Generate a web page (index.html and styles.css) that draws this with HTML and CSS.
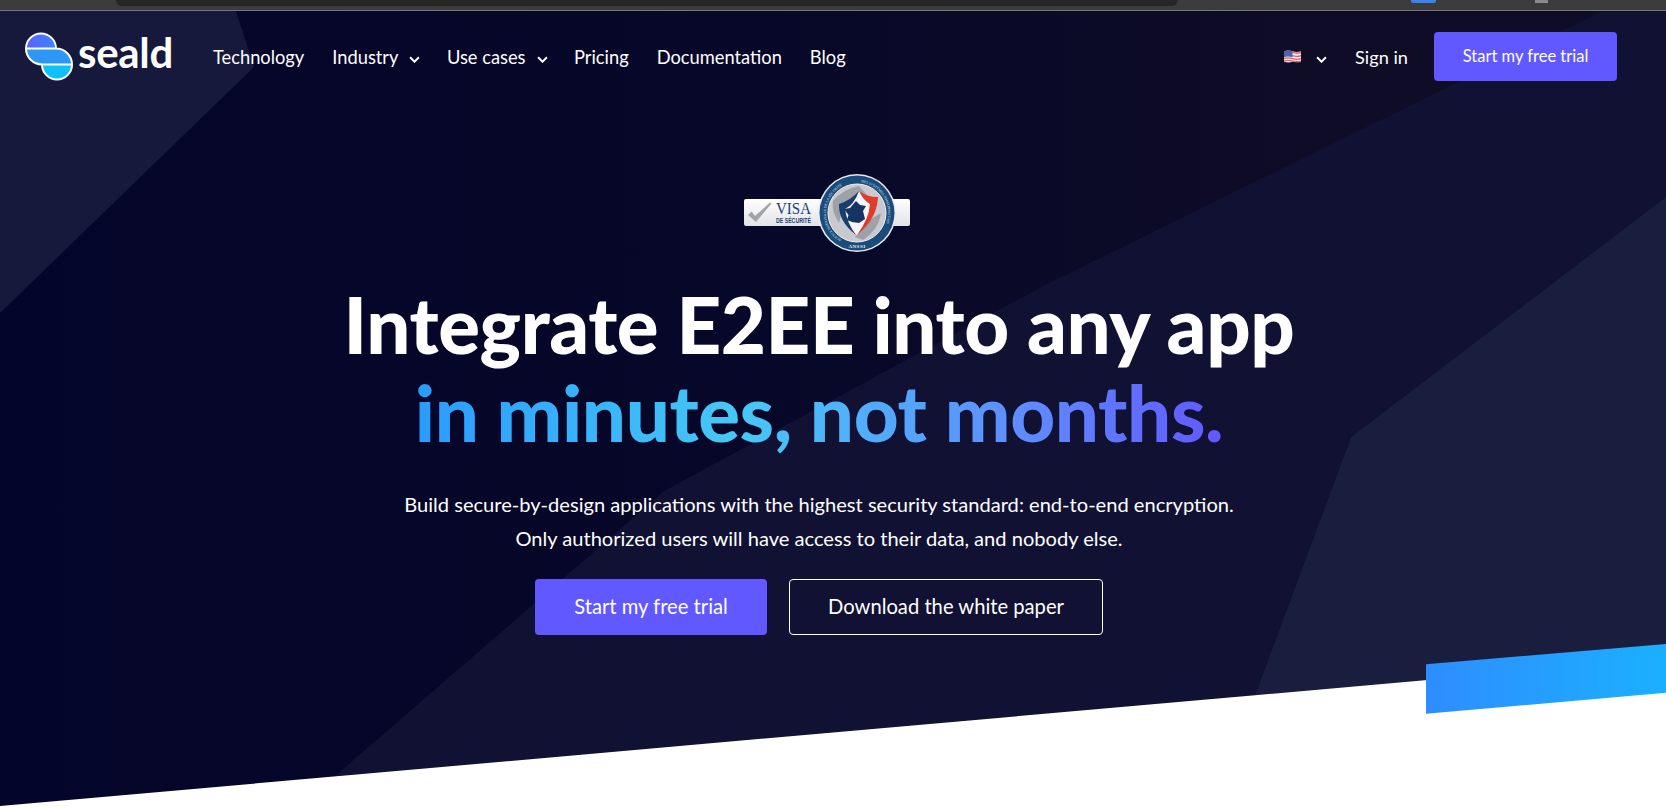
FILE: index.html
```html
<!DOCTYPE html>
<html lang="en">
<head>
<meta charset="utf-8">
<title>Seald</title>
<link rel="stylesheet" href="styles.css">
</head>
<body>
<div class="chrome">
  <div class="chrome-tab"></div>
  <div class="chrome-blue"></div>
  <div class="chrome-gray"></div>
</div>
<main class="hero">
  <svg class="backdrop" viewBox="0 0 1666 797" preserveAspectRatio="none" aria-hidden="true">
    <defs>
      <linearGradient id="bg" x1="0" y1="0" x2="1" y2="0">
        <stop offset="0" stop-color="#04052a"/>
        <stop offset="0.45" stop-color="#070729"/>
        <stop offset="0.8" stop-color="#0e0c26"/>
        <stop offset="1" stop-color="#0e0c28"/>
      </linearGradient>
      <linearGradient id="stripe" x1="0" y1="0" x2="1" y2="0">
        <stop offset="0" stop-color="#2e8dff"/>
        <stop offset="1" stop-color="#1bb0ff"/>
      </linearGradient>
    </defs>
    <rect width="1666" height="797" fill="url(#bg)"/>
    <polygon points="0,0 236,0 254,56 0,302" fill="#17193c"/>
    <polygon points="1666,0 1666,186 1351,426 1253,690 335,765 664,480 1045,274 1598,2" fill="#101133"/>
    <polygon points="1666,186 1351,426 1253,690 1666,690" fill="#1a1e3e"/>
    <polygon points="0,795 1666,648 1666,797 0,797" fill="#fff"/>
    <polygon points="1426,653.300 1666,633 1666,681.700 1426,702.700" fill="url(#stripe)"/>
  </svg>
  <header class="nav">
    <a class="brand">
      <svg class="logo" viewBox="0 0 48 49" aria-hidden="true">
        <defs>
          <linearGradient id="l1" x1="0" y1="0" x2="1" y2="0"><stop offset="0" stop-color="#5c60ff"/><stop offset="1" stop-color="#3a85fb"/></linearGradient>
        </defs>
        <path d="M1 16.500 A15 15 0 0 1 31 16.500 Z" fill="url(#l1)"/>
        <path d="M1 16.500 H31 A16 16 0 0 1 47 32.500 H17 A16 16 0 0 1 1 16.500 Z" fill="#2c97f6"/>
        <path d="M17 32.500 H47 A15 15 0 0 1 17 32.500 Z" fill="#0dc0ff"/>
        <path d="M1 16.500 A15 15 0 0 1 31 16.500 A16 16 0 0 1 47 32.500 A15 15 0 0 1 17 32.500 A16 16 0 0 1 1 16.500 Z M1 16.500 H31 M17 32.500 H47" fill="none" stroke="#fff" stroke-width="2"/>
      </svg>
      <span class="wordmark">seald</span>
    </a>
    <nav class="links">
      <a>Technology</a>
      <a>Industry<svg class="chev" viewBox="0 0 10 6"><path d="M1 1 L5 5 L9 1" /></svg></a>
      <a>Use cases<svg class="chev" viewBox="0 0 10 6"><path d="M1 1 L5 5 L9 1" /></svg></a>
      <a>Pricing</a>
      <a>Documentation</a>
      <a>Blog</a>
    </nav>
    <div class="nav-right">
      <span class="lang">
        <svg class="flag" viewBox="0 0 16 12" aria-hidden="true">
          <path d="M0 1 Q4 -0.500 8 1 T16 1 V11 Q12 9.500 8 11 T0 11 Z" fill="#f3eef2"/>
          <path d="M0 2.200 Q4 0.800 8 2.200 T16 2.200 M0 5.200 Q4 3.800 8 5.200 T16 5.200 M0 8 Q4 6.600 8 8 T16 8 M0 10.400 Q4 9 8 10.400 T16 10.400" fill="none" stroke="#e4606a" stroke-width="1.300"/>
          <path d="M0 1 Q4 -0.500 8 1 V6.800 Q4 5.400 0 6.800 Z" fill="#4d63ad"/>
        </svg>
        <svg class="chev" viewBox="0 0 10 6"><path d="M1 1 L5 5 L9 1" /></svg>
      </span>
      <a class="signin">Sign in</a>
      <a class="btn btn-small">Start my free trial</a>
    </div>
  </header>
  <section class="content">
    <svg class="visa" viewBox="0 0 168 80" aria-hidden="true">
      <defs>
        <linearGradient id="pl" x1="0" y1="0" x2="0" y2="1"><stop offset="0" stop-color="#ffffff"/><stop offset="1" stop-color="#e2e3e8"/></linearGradient>
        <path id="ringleft" d="M98.500 66.800 A31 31 0 0 1 113 9"/>
        <path id="ringright" d="M115 9 A31 31 0 0 1 129.500 66.800"/>
      </defs>
      <rect x="1" y="26" width="166" height="27" rx="2" fill="url(#pl)"/>
      <path d="M5 42 L8.500 38.500 L12 43 L27 29.500 L28.500 30.500 L13 49 Z" fill="#a3a4a8"/>
      <text class="visa-word" x="33" y="40.500" textLength="35" lengthAdjust="spacingAndGlyphs">VISA</text>
      <text class="visa-sub" x="33" y="50.400" textLength="35" lengthAdjust="spacingAndGlyphs">DE SÉCURITÉ</text>
      <circle cx="114" cy="40" r="39" fill="#e6ecf2"/>
      <circle cx="114" cy="40" r="37.500" fill="#1b4b7a"/>
      <text class="visa-ring"><textPath href="#ringleft">AGENCE NATIONALE DE LA SÉCURITÉ</textPath></text>
      <text class="visa-ring"><textPath href="#ringright" startOffset="3">DES SYSTÈMES D'INFORMATION</textPath></text>
      <text class="visa-ansi" x="114" y="75" text-anchor="middle">ANSSI</text>
      <circle cx="114" cy="40" r="29" fill="#c9cad0" stroke="#f0f1f3" stroke-width="1"/>
      <path d="M90 28 Q100 16 116 13 L124 22 L112 30 L100 34 L96 50 Q88 38 90 28 Z M128 46 L138 40 Q136 56 120 67 L112 64 Z" fill="#9fa1a8"/>
      <path d="M114 62 Q100 50 101 33 Q110 30 116 18 Q122 26 131 28 Q130 48 114 62 Z" fill="#f6f6f8"/>
      <path d="M116 18 Q108 27 96 31 Q95 48 113 62 Q104 50 102 36 Q111 32 116 18 Z" fill="#1a3d70"/>
      <path d="M116 18 Q124 24 135 24 Q134 46 114 62 Q126 46 127 31 Q120 27 116 18 Z" fill="#e1392b"/>
      <path d="M113 28 L117 32 L123 33 L120 38 L122 46 L116 50 L109 49 L104 47 L105.500 42 L101 36 L107 35 Z" fill="#163463"/>
    </svg>
    <h1 class="title">Integrate E2EE into any app<br><span class="grad">in minutes, not months.</span></h1>
    <p class="lead">Build secure-by-design applications with the highest security standard: end-to-end encryption.<br>Only authorized users will have access to their data, and nobody else.</p>
    <div class="cta">
      <a class="btn btn-large">Start my free trial</a>
      <a class="btn btn-large btn-outline">Download the white paper</a>
    </div>
  </section>
</main>
</body>
</html>
```
FILE: styles.css
```css
* { box-sizing: border-box; }
html, body { margin: 0; height: 808px; overflow: hidden; }
body { background: #fff; font-family: Lato, "Open Sans", sans-serif; color: #fff; }

.chrome { height: 11px; background: #3c3c3c; border-bottom: 1px solid #77777a; display: flex; align-items: flex-start; }
.chrome-tab { width: 1062px; height: 6px; margin-left: 116px; background: #262626; border-radius: 0 0 10px 10px; }
.chrome-blue { width: 25px; height: 3px; margin-left: 233px; background: #3b82ea; border-radius: 0 0 2px 2px; }
.chrome-gray { width: 13px; height: 3px; margin-left: 99px; background: #8a8a8a; }

.hero { position: relative; height: 797px; }
.backdrop { position: absolute; inset: 0; width: 100%; height: 100%; }

.nav { position: relative; display: flex; align-items: center; height: 70px; padding: 21px 49px 0 25px; }
.brand { display: flex; align-items: center; gap: 5px; margin-top: -1px; }
.logo { width: 48px; height: 49px; }
.wordmark { font-size: 42px; font-weight: 700; line-height: 1; margin-top: -8px; letter-spacing: -0.3px; }
.links { display: flex; gap: 28px; margin-left: 40px; font-size: 18.300px; }
.links a { display: flex; align-items: center; }
.links .chev { margin-right: -1.500px; }
.chev { width: 11px; height: 7px; margin-left: 11px; margin-top: 5px; fill: none; stroke: #fff; stroke-width: 1.800; }
.nav-right { margin-left: auto; display: flex; align-items: center; font-size: 18.200px; }
.lang { display: flex; align-items: center; }
.flag { width: 17px; height: 13px; }
.lang .chev { margin-left: 15px; }
.signin { margin-left: 28px; }
.btn { display: flex; align-items: center; justify-content: center; background: #6158ff; border-radius: 4px; color: #fff; }
.btn-small { width: 183px; height: 49px; margin-left: 26px; font-size: 16.500px; padding-bottom: 1px; }

.content { position: relative; display: flex; flex-direction: column; align-items: center; padding-right: 28px; }
.visa { width: 168px; height: 80px; margin: 92px 0 0 16px; }
.visa-word { font-family: "Liberation Serif", serif; font-size: 16.500px; fill: #1c3f75; }
.visa-sub { font-family: "Liberation Sans", sans-serif; font-size: 7px; font-weight: 700; fill: #1c3f75; }
.visa-ring { font-family: "Liberation Serif", serif; font-size: 3.600px; fill: #dfe6ee; }
.visa-ansi { font-family: "Liberation Serif", serif; font-size: 5px; font-weight: 700; fill: #eef2f6; letter-spacing: 0.5px; }
.title { margin: 27px 0 0; font-size: 78px; line-height: 88px; font-weight: 900; text-align: center; letter-spacing: -0.4px; }
.grad { background: linear-gradient(90deg, #2a9bff 0%, #46c8f5 40%, #5f8cff 75%, #6158ff 100%); -webkit-background-clip: text; background-clip: text; color: transparent; }
.lead { margin: 31px 0 0; font-size: 20.100px; line-height: 34px; text-align: center; }
.cta { display: flex; gap: 22px; margin-top: 24px; }
.btn-large { height: 56px; width: 232px; font-size: 20.200px; padding-bottom: 2px; }
.btn-outline { width: 314px; background: transparent; border: 1px solid #fff; }
```
